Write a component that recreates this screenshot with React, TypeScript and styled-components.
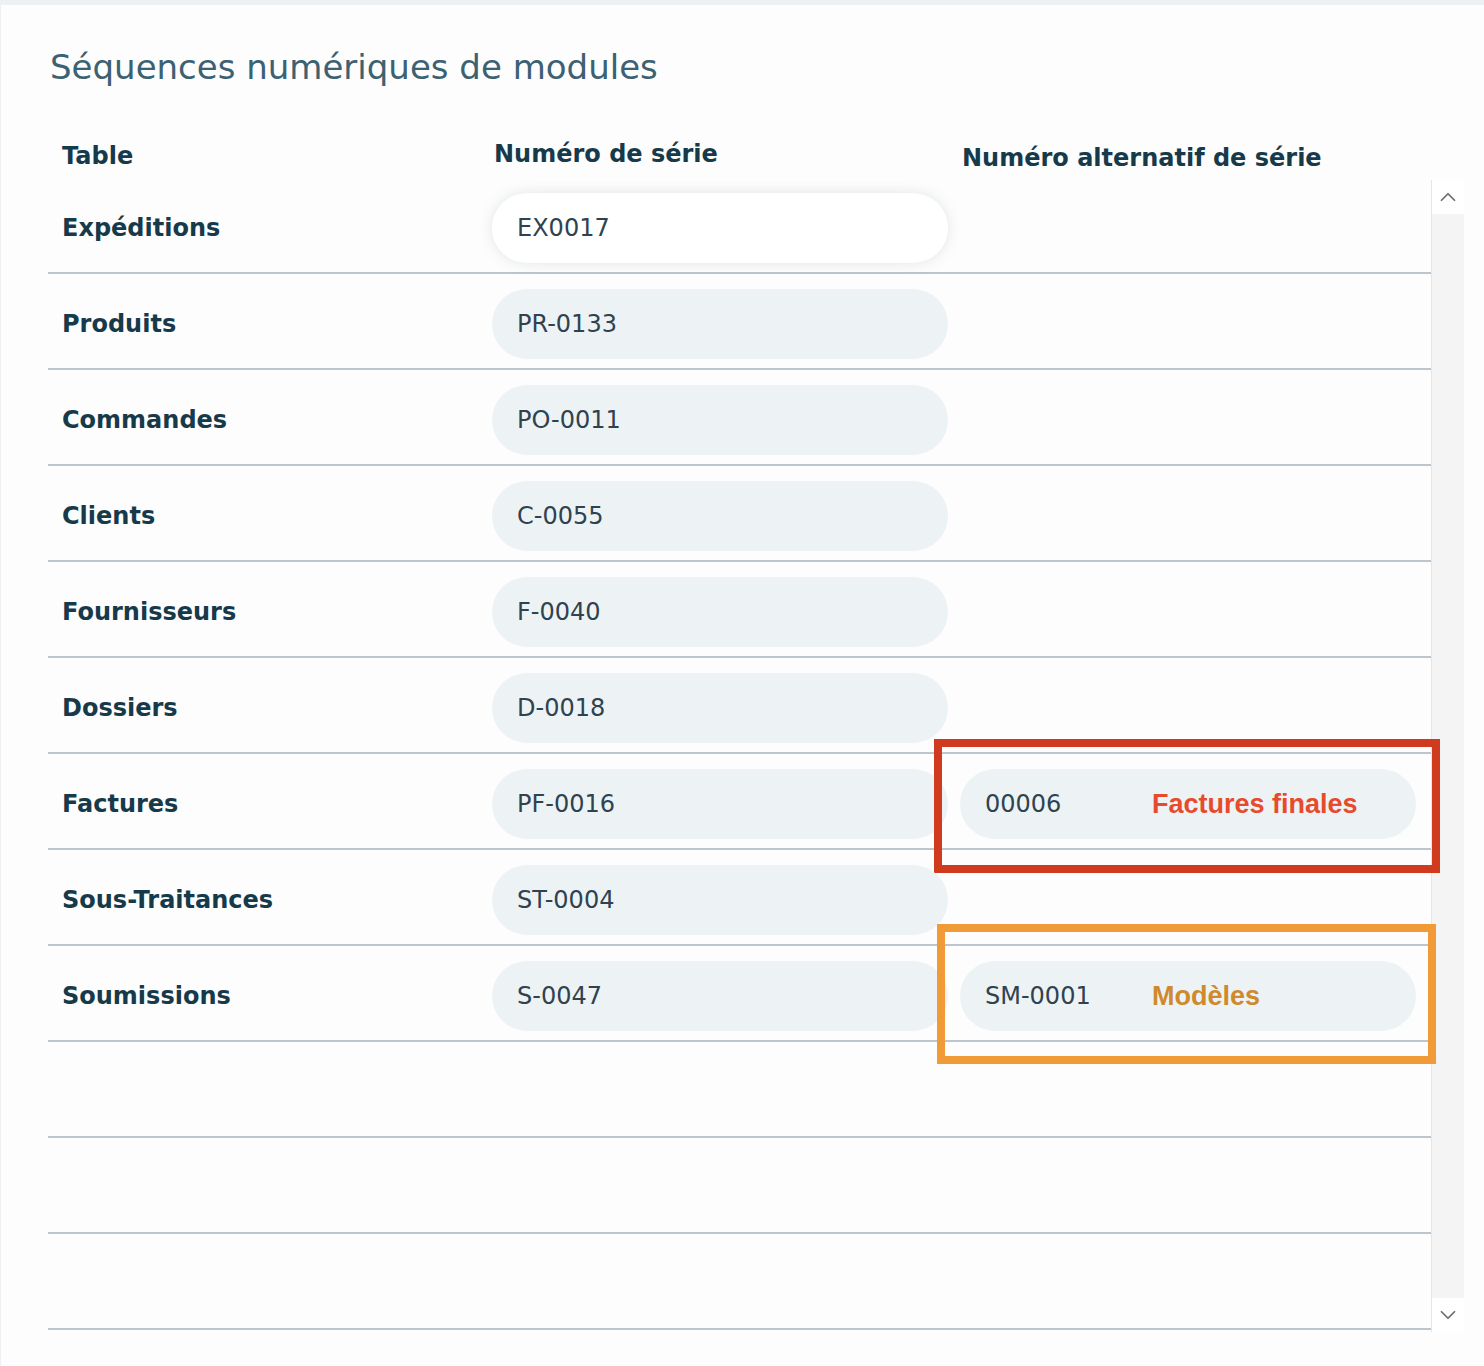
import { createGlobalStyle, styled } from "styled-components";
import { ChevronDown, ChevronUp } from "lucide-react";

interface Sequence {
  table: string;
  serial: string;
  alt?: string;
  note?: "red" | "orange";
  noteText?: string;
  focused?: boolean;
}

const sequences: Sequence[] = [
  { table: "Expéditions", serial: "EX0017", focused: true },
  { table: "Produits", serial: "PR-0133" },
  { table: "Commandes", serial: "PO-0011" },
  { table: "Clients", serial: "C-0055" },
  { table: "Fournisseurs", serial: "F-0040" },
  { table: "Dossiers", serial: "D-0018" },
  { table: "Factures", serial: "PF-0016", alt: "00006", note: "red", noteText: "Factures finales" },
  { table: "Sous-Traitances", serial: "ST-0004" },
  { table: "Soumissions", serial: "S-0047", alt: "SM-0001", note: "orange", noteText: "Modèles" },
];

const EMPTY_ROWS = 3;

const GlobalStyle = createGlobalStyle`
  html, body {
    margin: 0;
    padding: 0;
    background: #fdfdfd;
  }
  body {
    font-family: "DejaVu Sans", Verdana, sans-serif;
  }
`;

const Page = styled.div`
  min-height: 1366px;
  box-sizing: border-box;
  border-top: 5px solid #edf1f4;
  border-left: 1px solid #eef1f3;
  background: #fdfdfd;
`;

const Title = styled.h1`
  margin: 42px 0 0 49px;
  font-size: 34px;
  line-height: 40px;
  font-weight: normal;
  color: #3b6172;
`;

const Table = styled.div`
  margin-left: 47px;
  width: 1417px;
`;

const HeaderRow = styled.div`
  display: grid;
  grid-template-columns: 432px 456px 456px;
  column-gap: 12px;
  padding-top: 49px;
  height: 91px;
  box-sizing: border-box;
`;

const HeaderCell = styled.div<{ $indent: number; $shift?: number }>`
  padding-left: ${(p) => p.$indent}px;
  font-size: 24px;
  line-height: 40px;
  font-weight: bold;
  color: #173a4b;
  transform: translateY(${(p) => p.$shift ?? 0}px);
  white-space: nowrap;
`;

const Body = styled.div`
  display: flex;
`;

const Rows = styled.div`
  width: 1383px;
`;

const Row = styled.div`
  position: relative;
  display: grid;
  grid-template-columns: 432px 456px 456px;
  column-gap: 12px;
  align-items: center;
  height: 96px;
  box-sizing: border-box;
  padding-top: 5px;
  border-bottom: 2px solid #bcc6ce;
`;

const Label = styled.div`
  padding-left: 14px;
  font-size: 24px;
  font-weight: bold;
  color: #173a4b;
  white-space: nowrap;
`;

const Pill = styled.div<{ $focused?: boolean }>`
  display: flex;
  align-items: center;
  height: 70px;
  border-radius: 35px;
  padding: 1px 0 0 25px;
  box-sizing: border-box;
  font-size: 24px;
  color: #2e434f;
  background: ${(p) => (p.$focused ? "#ffffff" : "#edf2f5")};
  box-shadow: ${(p) => (p.$focused ? "0 0 14px rgba(60, 80, 95, 0.14)" : "none")};
`;

const PillValue = styled.span`
  width: 167px;
`;

const NoteText = styled.span<{ $tone: "red" | "orange" }>`
  font-family: "Liberation Sans", Arial, sans-serif;
  font-weight: bold;
  font-size: 27px;
  color: ${(p) => (p.$tone === "red" ? "#e64b2b" : "#cf8a2b")};
`;

const NoteBox = styled.div<{ $tone: "red" | "orange" }>`
  position: absolute;
  box-sizing: border-box;
  pointer-events: none;
  left: ${(p) => (p.$tone === "red" ? 886 : 889)}px;
  top: ${(p) => (p.$tone === "red" ? -15 : -22)}px;
  width: ${(p) => (p.$tone === "red" ? 506 : 499)}px;
  height: ${(p) => (p.$tone === "red" ? 134 : 140)}px;
  border: 8px solid ${(p) => (p.$tone === "red" ? "#d03b20" : "#f19a38")};
`;

const Scrollbar = styled.div`
  width: 33px;
  margin-top: 2px;
  height: 1152px;
  display: flex;
  flex-direction: column;
  border-left: 1px solid #e4e6e8;
  background: #f4f4f4;
  box-sizing: border-box;
`;

const ScrollButton = styled.div`
  height: 34px;
  display: flex;
  align-items: center;
  justify-content: center;
  background: #ffffff;
  color: #6a6a6a;
`;

const Track = styled.div`
  flex: 1;
`;

function App() {
  return (
    <>
      <GlobalStyle />
      <Page>
        <Title>Séquences numériques de modules</Title>
        <Table>
          <HeaderRow>
            <HeaderCell $indent={14} $shift={0}>Table</HeaderCell>
            <HeaderCell $indent={2} $shift={-2}>Numéro de série</HeaderCell>
            <HeaderCell $indent={2} $shift={2}>Numéro alternatif de série</HeaderCell>
          </HeaderRow>
          <Body>
            <Rows>
              {sequences.map((s) => (
                <Row key={s.table}>
                  <Label>{s.table}</Label>
                  <Pill $focused={s.focused}>{s.serial}</Pill>
                  {s.alt ? (
                    <Pill>
                      <PillValue>{s.alt}</PillValue>
                      {s.note && <NoteText $tone={s.note}>{s.noteText}</NoteText>}
                    </Pill>
                  ) : (
                    <div />
                  )}
                  {s.note && <NoteBox $tone={s.note} />}
                </Row>
              ))}
              {Array.from({ length: EMPTY_ROWS }).map((_, i) => (
                <Row key={"empty" + i} />
              ))}
            </Rows>
            <Scrollbar>
              <ScrollButton>
                <ChevronUp size={26} strokeWidth={1.6} />
              </ScrollButton>
              <Track />
              <ScrollButton>
                <ChevronDown size={26} strokeWidth={1.6} />
              </ScrollButton>
            </Scrollbar>
          </Body>
        </Table>
      </Page>
    </>
  );
}

export default App;
